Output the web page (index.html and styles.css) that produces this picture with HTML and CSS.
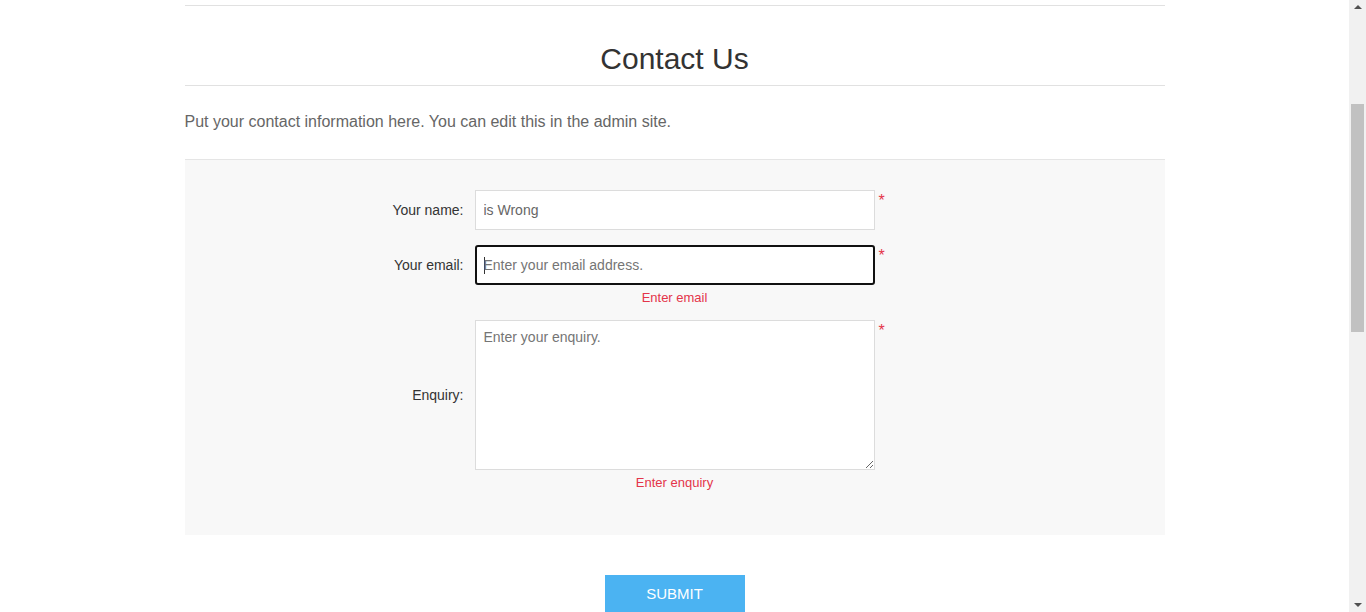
FILE: index.html
```html
<!DOCTYPE html>
<html lang="en">
<head>
<meta charset="utf-8">
<title>Contact Us</title>
<link rel="stylesheet" href="styles.css">
</head>
<body>
<div class="page">
  <main class="content">
    <header class="page-head">
      <h1 class="page-title">Contact Us</h1>
    </header>
    <p class="intro">Put your contact information here. You can edit this in the admin site.</p>
    <form class="contact-form">
      <div class="form-box">
        <div class="field">
          <label class="field-label" for="name">Your name:</label>
          <input class="field-input" id="name" type="text" value="is Wrong">
          <span class="req">*</span>
        </div>
        <div class="field">
          <label class="field-label" for="email">Your email:</label>
          <input class="field-input is-focused" id="email" type="text" placeholder="Enter your email address.">
          <span class="req">*</span>
          <span class="field-error">Enter email</span>
        </div>
        <div class="field">
          <label class="field-label" for="enquiry">Enquiry:</label>
          <textarea class="field-input field-textarea" id="enquiry" placeholder="Enter your enquiry."></textarea>
          <span class="req">*</span>
          <span class="field-error">Enter enquiry</span>
        </div>
      </div>
      <div class="actions">
        <button class="submit-btn" type="button">SUBMIT</button>
      </div>
    </form>
  </main>
  <aside class="scrollbar">
    <span class="sb-arrow sb-up"></span>
    <div class="sb-track"><div class="sb-thumb"></div></div>
    <span class="sb-arrow sb-down"></span>
  </aside>
</div>
</body>
</html>
```
FILE: styles.css
```css
* { box-sizing: border-box; }
html, body { margin: 0; padding: 0; height: 100%; overflow: hidden; }
body {
  font-family: "Liberation Sans", Arial, sans-serif;
  color: #333;
  background: #fff;
}
.page {
  display: flex;
  height: 100vh;
}
.content {
  flex: 1;
  display: flex;
  flex-direction: column;
  align-items: center;
  padding-top: 5px;
}
.page-head,
.intro,
.contact-form {
  width: 980px;
}
.page-head {
  border-top: 1px solid #e1e1e1;
  border-bottom: 1px solid #e1e1e1;
  padding: 36px 0 9px;
}
.page-title {
  margin: 0;
  font-size: 30px;
  line-height: 34px;
  font-weight: normal;
  text-align: center;
  color: #333;
}
.intro {
  margin: 26px 0 27px;
  font-size: 16px;
  line-height: 20px;
  color: #666;
}
.form-box {
  background: #f8f8f8;
  border-top: 1px solid #e5e5e5;
  padding: 30px 0 45px;
  display: flex;
  flex-direction: column;
  gap: 15px;
}
.field {
  display: grid;
  grid-template-columns: 1fr 400px 1fr;
  align-items: center;
}
.field-label {
  grid-column: 1;
  grid-row: 1;
  text-align: right;
  padding-right: 11px;
  font-size: 14px;
  color: #333;
}
.field-input {
  grid-column: 2;
  grid-row: 1;
  width: 400px;
  height: 40px;
  border: 1px solid #dcdcdc;
  border-radius: 0;
  background: #fff;
  padding: 0 8px;
  font-family: "Liberation Sans", Arial, sans-serif;
  font-size: 14px;
  color: #666;
  outline: none;
  margin: 0;
}
.field-input::placeholder { color: #757575; }
.field-input.is-focused {
  border: 2px solid #111;
  border-radius: 3px;
  padding-left: 7px;
  background-image: linear-gradient(#333, #333);
  background-size: 1px 17px;
  background-position: 7px center;
  background-repeat: no-repeat;
}
.field-textarea {
  height: 150px;
  padding: 7px 8px;
  resize: vertical;
  display: block;
  line-height: 18px;
}
.req {
  grid-column: 3;
  grid-row: 1;
  align-self: start;
  padding-left: 4px;
  margin-top: 3px;
  color: #e4354a;
  font-size: 16px;
  line-height: 16px;
}
.field-error {
  grid-column: 2;
  grid-row: 2;
  text-align: center;
  margin-top: 5px;
  font-size: 13px;
  line-height: 15px;
  color: #e4354a;
}
.actions {
  display: flex;
  justify-content: center;
  padding-top: 40px;
}
.submit-btn {
  width: 140px;
  height: 37px;
  border: 0;
  background: #4bb3f2;
  color: #fff;
  font-family: "Liberation Sans", Arial, sans-serif;
  font-size: 15px;
  padding: 0;
  cursor: pointer;
}
.scrollbar {
  width: 17px;
  flex: 0 0 17px;
  background: #f1f1f1;
  display: flex;
  flex-direction: column;
  align-items: center;
}
.sb-arrow {
  width: 0;
  height: 0;
  border-left: 4px solid transparent;
  border-right: 4px solid transparent;
  margin: 5px 0;
}
.sb-up { border-bottom: 4px solid #505050; margin-top: 5px; }
.sb-down { border-top: 4px solid #505050; margin-bottom: 5px; }
.sb-track {
  flex: 1;
  width: 100%;
  padding: 90px 2px 0;
}
.sb-thumb {
  height: 228px;
  background: #c1c1c1;
}
```
